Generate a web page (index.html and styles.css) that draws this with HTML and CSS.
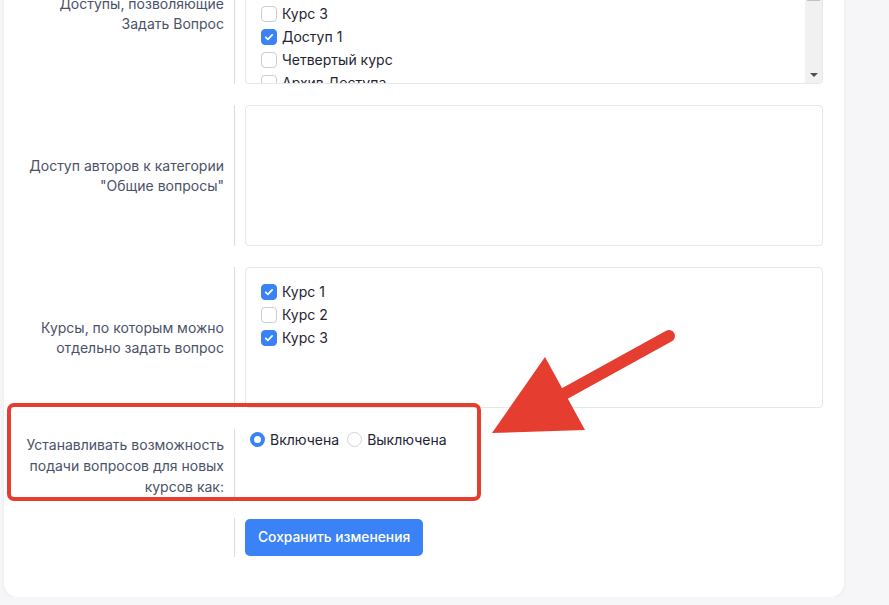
FILE: index.html
```html
<!DOCTYPE html>
<html lang="ru">

<head>
    <meta charset="UTF-8">
    <meta name="viewport" content="width=device-width, initial-scale=1.0">
    <title>Настройки вопросов</title>
    <link rel="stylesheet" href="styles.css">
</head>

<body>
    <div class="card">
        <div class="row">
            <div class="label">Доступы, позволяющие Задать Вопрос</div>
            <div class="field">
                <div class="box scroll">
                    <div class="list">
                        <div class="check"><span class="cb on"><svg viewBox="0 0 16 16"><path d="M4.3 8.3l2.4 2.3 4.9-5.1"/></svg></span>Курс 1</div>
                        <div class="check"><span class="cb"></span>Курс 2</div>
                        <div class="check"><span class="cb"></span>Курс 3</div>
                        <div class="check"><span class="cb on"><svg viewBox="0 0 16 16"><path d="M4.3 8.3l2.4 2.3 4.9-5.1"/></svg></span>Доступ 1</div>
                        <div class="check"><span class="cb"></span>Четвертый курс</div>
                        <div class="check"><span class="cb"></span>Архив Доступа</div>
                        <div class="check"><span class="cb"></span>Доступ 2</div>
                        <div class="check"><span class="cb"></span>Пятый курс</div>
                    </div>
                    <div class="bar">
                        <div class="bar-up"></div>
                        <div class="thumb"></div>
                        <div class="bar-down"></div>
                    </div>
                </div>
            </div>
        </div>

        <div class="row">
            <div class="label">Доступ авторов к категории "Общие вопросы"</div>
            <div class="field">
                <div class="box"></div>
            </div>
        </div>

        <div class="row">
            <div class="label">Курсы, по которым можно отдельно задать вопрос</div>
            <div class="field">
                <div class="box">
                    <div class="check"><span class="cb on"><svg viewBox="0 0 16 16"><path d="M4.3 8.3l2.4 2.3 4.9-5.1"/></svg></span>Курс 1</div>
                    <div class="check"><span class="cb"></span>Курс 2</div>
                    <div class="check"><span class="cb on"><svg viewBox="0 0 16 16"><path d="M4.3 8.3l2.4 2.3 4.9-5.1"/></svg></span>Курс 3</div>
                </div>
            </div>
        </div>

        <div class="row top">
            <div class="label tall">Устанавливать возможность подачи вопросов для новых курсов как:</div>
            <div class="field">
                <div class="radios">
                    <div class="radio"><span class="rb on"></span>Включена</div>
                    <div class="radio"><span class="rb"></span>Выключена</div>
                </div>
            </div>
        </div>

        <div class="row">
            <div class="label"></div>
            <div class="field">
                <div class="btn">Сохранить изменения</div>
            </div>
        </div>
    </div>

    <!-- аннотация со скриншота -->
    <div class="mark"></div>
    <svg class="arrow" width="889" height="605" viewBox="0 0 889 605">
        <line x1="669" y1="336" x2="553" y2="400" stroke="#e53d30" stroke-width="12" stroke-linecap="round"/>
        <polygon points="545,357 492,433 585,430" fill="#e53d30"/>
    </svg>
</body>

</html>
```

FILE: styles.css
```css
* {
    box-sizing: border-box;
}

body {
    margin: 0;
    background-color: #f6f6f8;
    font-family: Inter, "Noto Sans", sans-serif;
    font-size: 14px;
    color: #1f2433;
    overflow: hidden;
}

.card {
    width: 840px;
    margin: -77px 0 0 4px;
    padding: 20px 21px 40px 0;
    background-color: #fff;
    border-radius: 0 0 14px 14px;
    box-shadow: 0 1px 4px rgba(20, 20, 40, 0.06);
    display: flex;
    flex-direction: column;
    gap: 21px;
}

.row {
    display: flex;
    align-items: center;
}

.row.top {
    align-items: stretch;
}

.label {
    width: 230px;
    flex-shrink: 0;
    padding: 0 10px 0 15px;
    text-align: right;
    line-height: 20px;
    color: #4a5268;
}

.label.tall {
    padding-top: 5px;
    line-height: 21px;
}

.field {
    flex: 1;
    align-self: stretch;
    border-left: 1px solid #dcdcdf;
    padding-left: 10px;
    display: flex;
    align-items: center;
}

.row.top .field {
    align-items: flex-start;
}

.box {
    width: 100%;
    height: 141px;
    border: 1px solid #e6e7eb;
    border-radius: 4px;
    padding: 12px 15px;
}

/* список с полосой прокрутки */
.box.scroll {
    display: flex;
    padding: 0;
    overflow: hidden;
}

.list {
    flex: 1;
    padding: 12px 15px;
    overflow: hidden;
}

.bar {
    width: 17px;
    background-color: #f1f1f1;
    display: flex;
    flex-direction: column;
}

.bar-up {
    height: 17px;
}

.thumb {
    height: 40px;
    margin: 0 2px;
    background-color: #c1c1c1;
}

.bar-down {
    margin-top: auto;
    height: 17px;
    display: flex;
    justify-content: center;
    align-items: center;
}

.bar-down::after {
    content: "";
    border-left: 4px solid transparent;
    border-right: 4px solid transparent;
    border-top: 4px solid #505050;
}

.check {
    display: flex;
    align-items: center;
    height: 23px;
    gap: 5px;
}

.cb {
    width: 16px;
    height: 16px;
    border: 1px solid #c9ccd2;
    border-radius: 4px;
    background-color: #fff;
    flex-shrink: 0;
}

.cb.on {
    background-color: #3b82f6;
    border-color: #3b82f6;
}

.cb svg {
    display: block;
    width: 14px;
    height: 14px;
    fill: none;
    stroke: #fff;
    stroke-width: 2;
    stroke-linecap: round;
    stroke-linejoin: round;
}

.radios {
    display: flex;
    gap: 8px;
    padding-left: 5px;
    line-height: 21px;
}

.radio {
    display: flex;
    align-items: center;
    gap: 5px;
}

.rb {
    width: 15px;
    height: 15px;
    border: 1px solid #d2d4d8;
    border-radius: 50%;
    background-color: #fff;
}

.rb.on {
    border: 4.5px solid #3b82f6;
}

.btn {
    background-color: #3b82f6;
    color: #fff;
    font-weight: 500;
    font-size: 13.8px;
    padding: 8px 13px;
    line-height: 21px;
    border-radius: 5px;
    margin: 1px 0;
    cursor: pointer;
}

.mark {
    position: absolute;
    left: 7px;
    top: 403px;
    width: 474px;
    height: 98px;
    border: 4.5px solid #e53d30;
    border-radius: 7px;
}

.arrow {
    position: absolute;
    left: 0;
    top: 0;
}
```
